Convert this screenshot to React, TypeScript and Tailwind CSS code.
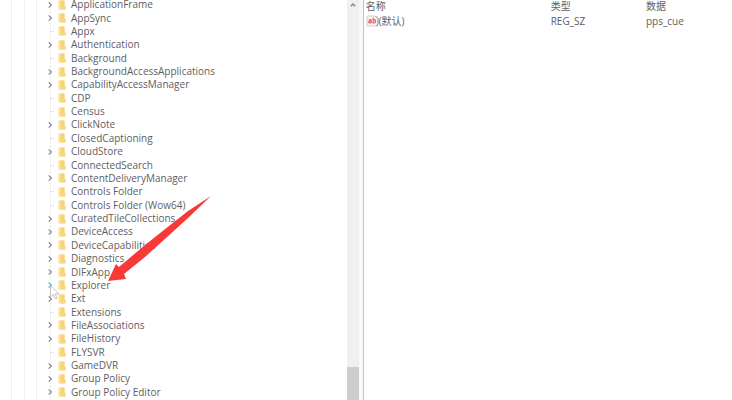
import React from 'react';
import { clsx } from 'clsx';

interface TreeKey {
  name: string;
  expandable?: boolean;
  hovered?: boolean;
}

const keys: TreeKey[] = [
  { name: 'ApplicationFrame', expandable: true },
  { name: 'AppSync', expandable: true },
  { name: 'Appx' },
  { name: 'Authentication', expandable: true },
  { name: 'Background' },
  { name: 'BackgroundAccessApplications', expandable: true },
  { name: 'CapabilityAccessManager', expandable: true },
  { name: 'CDP' },
  { name: 'Census' },
  { name: 'ClickNote', expandable: true },
  { name: 'ClosedCaptioning' },
  { name: 'CloudStore', expandable: true },
  { name: 'ConnectedSearch' },
  { name: 'ContentDeliveryManager', expandable: true },
  { name: 'Controls Folder' },
  { name: 'Controls Folder (Wow64)' },
  { name: 'CuratedTileCollections', expandable: true },
  { name: 'DeviceAccess', expandable: true },
  { name: 'DeviceCapabilities', expandable: true },
  { name: 'Diagnostics', expandable: true },
  { name: 'DIFxApp', expandable: true },
  { name: 'Explorer', expandable: true, hovered: true },
  { name: 'Ext', expandable: true },
  { name: 'Extensions' },
  { name: 'FileAssociations', expandable: true },
  { name: 'FileHistory', expandable: true },
  { name: 'FLYSVR' },
  { name: 'GameDVR', expandable: true },
  { name: 'Group Policy', expandable: true },
  { name: 'Group Policy Editor', expandable: true },
];

const FolderIcon = () => (
  <svg viewBox="0 0 8 10" className="h-[10px] w-2 shrink-0" aria-hidden="true">
    <path d="M0.5 0.5H6.5V5.5H7.5V9.5H0.5Z" fill="#fbdd90" />
    <path d="M2.5 0.5H6.5V8H2.5Z" fill="#f8d27a" />
    <path d="M0.5 0.5H1.5V9.5H0.5Z" fill="#fde9b6" />
    <path d="M5 6H7.5V9.5H2.5V8Z" fill="#f9d682" />
  </svg>
);

const StringIcon = () => (
  <svg viewBox="0 0 13 12" className="h-3 w-[13px] shrink-0" aria-hidden="true">
    <path d="M1 1H9.5L12 3.5V11H1Z" fill="#fdf3f2" stroke="#cfc4c4" strokeWidth="0.8" />
    <path d="M9.5 1L12 3.5V9L10 11" fill="none" stroke="#88888c" strokeWidth="0.9" />
    <path
      d="M2.8 4.5H4.2Q5.2 4.5 5.2 5.5V8M5.2 6.1H3.8Q2.7 6.1 2.7 7Q2.7 8 3.8 8H5.2M7.2 2.8V8H8.3Q9.5 8 9.5 6.3Q9.5 4.6 8.3 4.6H7.2"
      fill="none"
      stroke="#e4574e"
      strokeWidth="1.1"
    />
  </svg>
);

const TreeRow: React.FC<{ item: TreeKey }> = ({ item }) => (
  <li className="flex items-center">
    {item.expandable ? (
      <button type="button" aria-label={`Expand ${item.name}`} className="flex h-2 w-2 shrink-0 items-center justify-center bg-white">
        <svg viewBox="0 0 8 8" className={clsx('h-2 w-2', item.hovered ? 'text-[#45b5e6]' : 'text-[#85858a]')}>
          <path d="M2.7 1.4L5.4 4L2.7 6.6" fill="none" stroke="currentColor" strokeWidth="1.2" />
        </svg>
      </button>
    ) : (
      <span className="ml-1 w-1 shrink-0 border-t border-dotted border-[#dcdcdc]" />
    )}
    <span className="ml-1 flex items-center gap-[5px]">
      <FolderIcon />
      <span className="whitespace-nowrap">{item.name}</span>
    </span>
  </li>
);

const KeyTree = () => (
  <nav className="relative flex min-w-0 flex-1">
    <div className="grid w-[46px] shrink-0 grid-cols-[12px_13px_12px_9px]" aria-hidden="true">
      <span className="border-r border-[#f0f0f0]" />
      <span className="border-r border-[#f0f0f0]" />
      <span className="border-r border-[#f0f0f0]" />
      <span />
    </div>
    <div className="relative -mt-0.5 flex min-w-0 flex-1">
      <span className="absolute inset-y-0 left-1 border-l border-dotted border-[#e2e2e2]" />
      <ul className="relative grid auto-rows-fr pb-px leading-[9px]">
        {keys.map((item) => (
          <TreeRow key={item.name} item={item} />
        ))}
      </ul>
    </div>

    {/* Pointer and arrow over the Explorer key */}
    <svg viewBox="0 0 10 15" className="absolute left-[50px] top-[285px] h-[15px] w-[10px]" aria-hidden="true">
      <path d="M0.5 0.5V12L3.3 9.4L5.3 14L7 13.2L5.2 8.9H9.2Z" fill="#ffffff" fillOpacity="0.7" stroke="#b5b5ba" strokeWidth="0.8" />
    </svg>
    <svg viewBox="0 0 104 88" className="absolute left-[108px] top-[195px] h-[88px] w-[104px]" aria-hidden="true">
      <path d="M103 1L80 23L37 62L16 79L18 84L0 86L8 69L11 72L37 50L80 16Z" fill="#f93838" />
    </svg>
  </nav>
);

const ScrollBar = () => (
  <div className="flex w-3 shrink-0 flex-col bg-[#f0f0f0]">
    <button type="button" aria-label="Scroll up" className="flex h-[10px] items-center justify-center">
      <svg viewBox="0 0 6 4" className="h-1 w-1.5">
        <path d="M0.8 3.2L3 1L5.2 3.2" fill="none" stroke="#85858a" strokeWidth="1.4" />
      </svg>
    </button>
    <span className="flex-1" />
    <span className="h-[33px] bg-[#cdcdcd]" />
  </div>
);

const ValueList = () => (
  <main className="min-w-0 flex-1 pl-0.5">
    <table className="w-full table-fixed border-collapse text-left">
      <colgroup>
        <col className="w-[50.5%]" />
        <col className="w-[26%]" />
        <col />
      </colgroup>
      <thead>
        <tr className="h-[13px]">
          <th className="p-0 font-normal">名称</th>
          <th className="p-0 font-normal">类型</th>
          <th className="p-0 font-normal">数据</th>
        </tr>
      </thead>
      <tbody>
        <tr className="h-4">
          <td className="p-0">
            <span className="flex items-center">
              <StringIcon />
              (默认)
            </span>
          </td>
          <td className="p-0">REG_SZ</td>
          <td className="p-0">pps_cue</td>
        </tr>
      </tbody>
    </table>
  </main>
);

export default function App() {
  return (
    <div className="flex min-h-screen bg-white font-['Open_Sans','Noto_Sans_CJK_SC',sans-serif] text-[10px] leading-[13px] text-[#5e5e62]">
      <div className="flex w-[49%] shrink-0">
        <KeyTree />
        <ScrollBar />
      </div>
      <div className="w-[5px] shrink-0 border-r border-[#c4c4c8] bg-[#f8f8f8]" />
      <ValueList />
    </div>
  );
}
